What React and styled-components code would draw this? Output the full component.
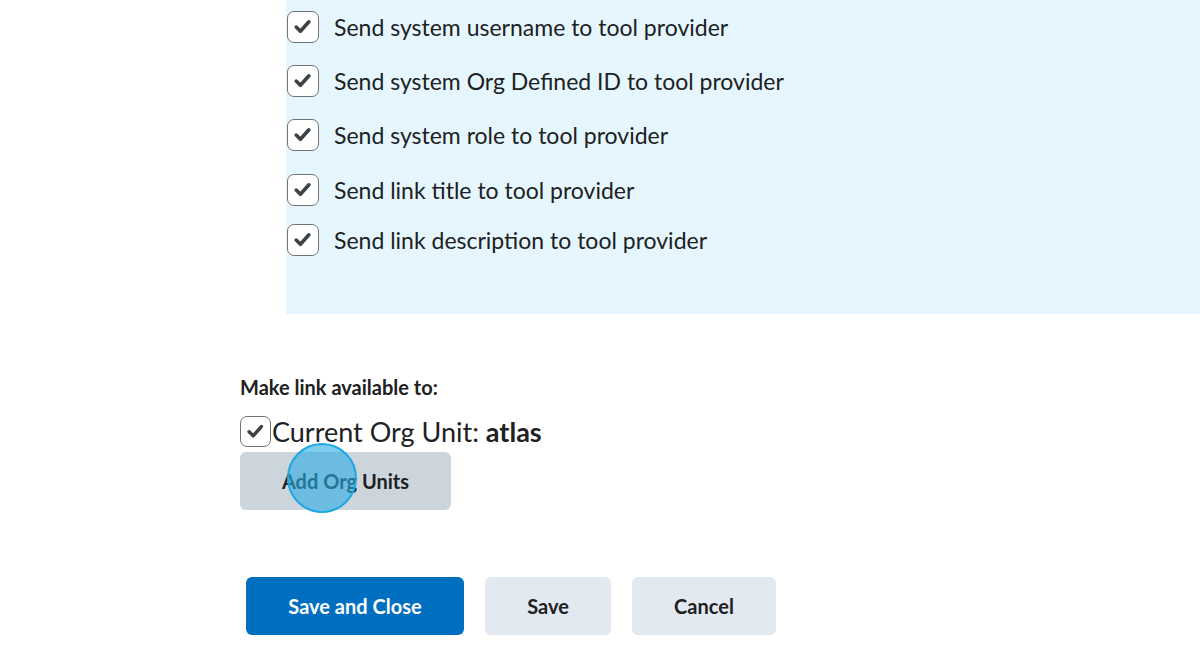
import React from "react";
import styled, { createGlobalStyle } from "styled-components";

const options = [
  { label: "Send system username to tool provider", top: 10 },
  { label: "Send system Org Defined ID to tool provider", top: 21 },
  { label: "Send system role to tool provider", top: 21 },
  { label: "Send link title to tool provider", top: 22 },
  { label: "Send link description to tool provider", top: 17 },
];

const Check = ({ size = 32 }) => (
  <Box size={size}>
    <svg width={size * 0.66} height={size * 0.66} viewBox="0 0 20 20">
      <path
        d="M4 10.5 L8 14.5 L16 5.5"
        fill="none"
        stroke="#3f4245"
        strokeWidth="3.4"
        strokeLinecap="round"
        strokeLinejoin="round"
      />
    </svg>
  </Box>
);

const App = () => {
  return (
    <>
      <GlobalStyle />
      <Page>
        <Panel>
          {options.map((o) => (
            <OptionRow key={o.label} top={o.top}>
              <Check />
              <span>{o.label}</span>
            </OptionRow>
          ))}
        </Panel>

        <Heading>Make link available to:</Heading>
        <OrgRow>
          <Check size={31} />
          <span>
            Current Org Unit: <b>atlas</b>
          </span>
        </OrgRow>
        <AddButton>
          Add Org Units
          <Ripple />
        </AddButton>

        <Actions>
          <Button primary width={218}>Save and Close</Button>
          <Button width={126}>Save</Button>
          <Button width={144}>Cancel</Button>
        </Actions>
      </Page>
    </>
  );
};

export default App;

const GlobalStyle = createGlobalStyle`
  body {
    margin: 0;
    background: #fff;
    font-family: Lato, "Open Sans", sans-serif;
    color: #202122;
  }
`;

const Page = styled.div`
  width: 1200px;
  height: 670px;
  overflow: hidden;
  padding-left: 240px;
  box-sizing: border-box;
  display: flex;
  flex-direction: column;
  align-items: flex-start;
`;

const Panel = styled.div`
  margin-left: 46px;
  width: 914px;
  height: 314px;
  background: #e6f6fe;
  box-sizing: border-box;
  display: flex;
  flex-direction: column;
`;

const OptionRow = styled.label`
  display: flex;
  align-items: center;
  gap: 15px;
  margin-top: ${(p) => p.top}px;
  margin-left: 1px;
  height: 33px;
  font-size: 23px;
  color: #202122;
`;

const Box = styled.span`
  width: ${(p) => p.size}px;
  height: ${(p) => p.size}px;
  box-sizing: border-box;
  border: 1.5px solid #6e7477;
  border-radius: 7px;
  background: #fff;
  display: flex;
  align-items: center;
  justify-content: center;
  flex-shrink: 0;
`;

const Heading = styled.div`
  margin-top: 61px;
  font-size: 20px;
  font-weight: 700;
  color: #202122;
`;

const OrgRow = styled.label`
  display: flex;
  align-items: center;
  gap: 1px;
  margin-top: 16px;
  font-size: 27px;
  color: #202122;

  b {
    font-weight: 700;
  }
`;

const AddButton = styled.button`
  position: relative;
  margin-top: 4px;
  width: 211px;
  height: 58px;
  border: none;
  border-radius: 6px;
  background: #cdd5dc;
  font-family: inherit;
  font-size: 20px;
  font-weight: 700;
  color: #202122;
  cursor: pointer;
`;

const Ripple = styled.span`
  position: absolute;
  left: 47px;
  top: -9px;
  width: 70px;
  height: 70px;
  box-sizing: border-box;
  border-radius: 50%;
  border: 2.5px solid #1ea7e0;
  background: rgba(41, 171, 226, 0.6);
`;

const Actions = styled.div`
  display: flex;
  gap: 21px;
  margin-top: 67px;
  margin-left: 6px;
`;

const Button = styled.button`
  width: ${(p) => p.width}px;
  height: 58px;
  border: none;
  border-radius: 6px;
  background: ${(p) => (p.primary ? "#006fbf" : "#e3e9f1")};
  color: ${(p) => (p.primary ? "#fff" : "#202122")};
  font-family: inherit;
  font-size: 20px;
  font-weight: 700;
  cursor: pointer;
`;
